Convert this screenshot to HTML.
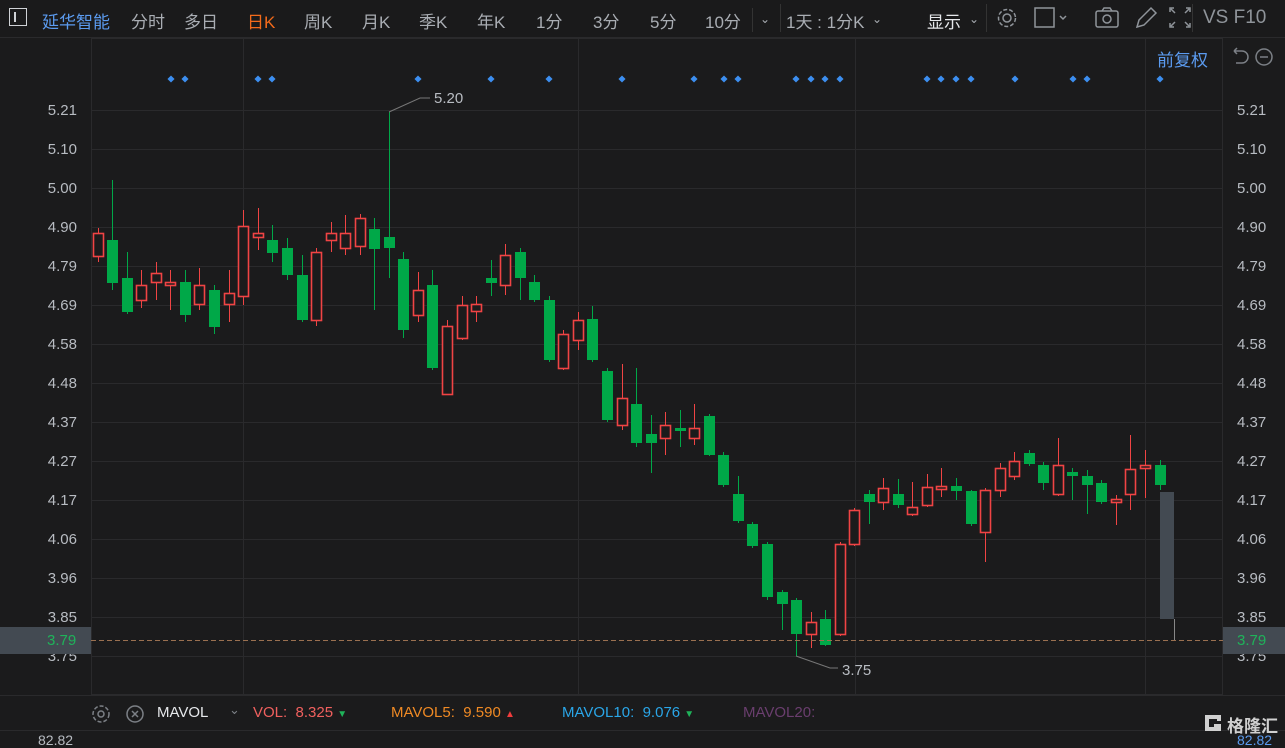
<!DOCTYPE html>
<html><head><meta charset="utf-8"><style>
body{margin:0;width:1285px;height:742px;background:#1b1b1c;overflow:hidden;font-family:"Liberation Sans","Noto Sans CJK SC",sans-serif;position:relative}
.t{position:absolute;white-space:nowrap}
.top span{position:absolute;top:8px;font-size:17px;color:#a9adb3}
</style></head><body>
<div style="position:absolute;left:0;top:0;width:1285px;height:37px;background:#1a1a1b;border-bottom:1px solid #2a2a2c"></div>
<div class="top">
<div style="position:absolute;left:9px;top:8px;width:18px;height:18px;border:1.5px solid #cfd2d6;box-sizing:border-box"></div>
<div style="position:absolute;left:14px;top:12px;width:2px;height:10px;background:#cfd2d6"></div>
<span style="left:42px;color:#5b9bf0">延华智能</span>
<span style="left:131px">分时</span><span style="left:184px">多日</span>
<span style="left:247px;color:#f26a1b">日K</span><span style="left:304px">周K</span>
<span style="left:362px">月K</span><span style="left:419px">季K</span><span style="left:477px">年K</span>
<span style="left:536px">1分</span><span style="left:593px">3分</span><span style="left:650px">5分</span>
<span style="left:705px">10分</span><span style="left:760px;font-size:12px;top:12px">⌄</span>
<span style="left:786px">1天 : 1分K</span><span style="left:872px;font-size:12px;top:12px">⌄</span>
<span style="left:927px;color:#e6e8eb">显示</span><span style="left:969px;font-size:12px;top:12px">⌄</span>
<span style="left:1203px;font-size:19px;top:7px;color:#8f949a">VS F10</span>
</div>
<div style="position:absolute;left:752px;top:8px;width:1px;height:24px;background:#333"></div>
<div style="position:absolute;left:780px;top:4px;width:1px;height:28px;background:#333"></div>
<div style="position:absolute;left:986px;top:4px;width:1px;height:28px;background:#333"></div>
<div style="position:absolute;left:1192px;top:4px;width:1px;height:28px;background:#333"></div>
<svg style="position:absolute;left:0;top:0" width="1285" height="40" fill="none" stroke="#8f949a" stroke-width="1.5">
<circle cx="1007" cy="18" r="4"/><circle cx="1007" cy="18" r="8.5" stroke-dasharray="4 2"/>
<rect x="1035" y="8" width="19" height="19"/><path d="M1060 16l3 3 3-3"/>
<rect x="1096" y="11" width="22" height="16" rx="2"/><circle cx="1107" cy="19" r="4"/><path d="M1102 11l2-3h6l2 3"/>
<path d="M1137 27l2-7 12-12 5 5-12 12z"/>
<path d="M1170 12v-4h4M1186 8h4v4M1190 23v4h-4M1174 27h-4v-4M1171 9l4 4M1189 9l-4 4M1189 26l-4-4M1171 26l4-4"/>
</svg>
<div class="t" style="left:1157px;top:46px;font-size:17px;color:#5b9bf0">前复权</div>
<svg style="position:absolute;left:1228px;top:45px" width="57" height="24" fill="none" stroke="#7c8086" stroke-width="1.5"><path d="M6 6h8a6 6 0 0 1 0 12h-6M6 6l3-3M6 6l3 3"/><circle cx="36" cy="12" r="8"/><path d="M32 12h8"/></svg>
<svg id="c" style="position:absolute;left:0;top:0" width="1285" height="742"></svg>
<div style="position:absolute;left:0;top:627px;width:91px;height:27px;background:#434a52"></div>
<div style="position:absolute;left:1223px;top:627px;width:62px;height:27px;background:#434a52"></div>
<div class="t" style="left:47px;top:632px;font-size:15px;color:#1fb35a">3.79</div>
<div class="t" style="left:1237px;top:632px;font-size:15px;color:#1fb35a">3.79</div>
<div class="t" style="left:842px;top:662px;font-size:15px;color:#b8bcc2">3.75</div>
<div class="t" style="left:434px;top:90px;font-size:15px;color:#b8bcc2">5.20</div>
<div style="position:absolute;left:0;top:695px;width:1285px;height:1px;background:#2a2a2c"></div>
<svg style="position:absolute;left:90px;top:702px" width="60" height="24" fill="none" stroke="#7c8086" stroke-width="1.5"><circle cx="11" cy="12" r="3"/><circle cx="11" cy="12" r="8" stroke-dasharray="4 2"/><circle cx="45" cy="12" r="8"/><path d="M42 9l6 6M48 9l-6 6"/></svg>
<div class="t" style="left:157px;top:704px;font-size:15px;color:#e6e8eb">MAVOL</div>
<div class="t" style="left:229px;top:702px;font-size:13px;color:#7c8086">⌄</div>
<div class="t" style="left:253px;top:704px;font-size:15px;color:#f0605e">VOL:&nbsp; 8.325 <span style="color:#1fb35a;font-size:10px">▼</span></div>
<div class="t" style="left:391px;top:704px;font-size:15px;color:#f08a24">MAVOL5:&nbsp; 9.590 <span style="color:#f03c3c;font-size:10px">▲</span></div>
<div class="t" style="left:562px;top:704px;font-size:15px;color:#2aa6e8">MAVOL10:&nbsp; 9.076 <span style="color:#1fb35a;font-size:10px">▼</span></div>
<div class="t" style="left:743px;top:704px;font-size:15px;color:#6a3e6e">MAVOL20:</div>
<div style="position:absolute;left:0;top:730px;width:1285px;height:1px;background:#2a2a2c"></div>
<div class="t" style="left:38px;top:732px;font-size:14px;color:#b8bcc2">82.82</div>
<div class="t" style="left:1237px;top:732px;font-size:14px;color:#5b9bf0">82.82</div>
<svg style="position:absolute;left:1204px;top:714px" width="18" height="18"><path d="M1 1h16v6h-4V5H5v8h5v-3h7v7H1z" fill="#d0d0d0"/></svg>
<div class="t" style="left:1227px;top:712px;font-size:17px;color:#d0d0d0;font-weight:bold">格隆汇</div>
<script>
var s='';
var gl='#2a2a2c';
s+='<rect x="91.5" y="38.5" width="1131" height="656" fill="none" stroke="'+gl+'"/>';
[243,578,855,1145].forEach(function(x){s+='<line x1="'+(x+.5)+'" y1="38" x2="'+(x+.5)+'" y2="694" stroke="'+gl+'"/>';});
var labs=['5.21','5.10','5.00','4.90','4.79','4.69','4.58','4.48','4.37','4.27','4.17','4.06','3.96','3.85'];
labs.forEach(function(l,i){var y=110+i*39;s+='<line x1="91" y1="'+(y+.5)+'" x2="1223" y2="'+(y+.5)+'" stroke="'+gl+'"/>';
s+='<text x="77" y="'+(y+5)+'" text-anchor="end" font-size="15" fill="#b8bcc2" font-family="Liberation Sans">'+l+'</text>';
s+='<text x="1237" y="'+(y+5)+'" font-size="15" fill="#b8bcc2" font-family="Liberation Sans">'+l+'</text>';});
s+='<line x1="91" y1="656.5" x2="1223" y2="656.5" stroke="'+gl+'"/>';
s+='<text x="77" y="661" text-anchor="end" font-size="15" fill="#b8bcc2" font-family="Liberation Sans">3.75</text>';
s+='<text x="1237" y="661" font-size="15" fill="#b8bcc2" font-family="Liberation Sans">3.75</text>';
var C=[[98,233,256,228,262,'r'],[112,240,283,180,290,'g'],[127,278,312,252,314,'g'],[141,285,300,270,308,'r'],[156,273,282,262,300,'r'],[170,282,285,270,310,'r'],[185,282,315,270,322,'g'],[199,285,304,268,310,'r'],[214,290,327,285,334,'g'],[229,293,304,270,322,'r'],[243,226,296,210,305,'r'],[258,233,237,208,250,'r'],[272,240,253,225,262,'g'],[287,248,275,238,280,'g'],[302,275,320,255,322,'g'],[316,252,320,248,326,'r'],[331,233,240,222,252,'r'],[345,233,248,215,255,'r'],[360,218,246,214,255,'r'],[374,229,249,218,310,'g'],[389,237,248,112,278,'g'],[403,259,330,252,338,'g'],[418,290,315,272,322,'r'],[432,285,368,270,370,'g'],[447,326,394,320,394,'r'],[462,305,338,296,340,'r'],[476,304,311,296,322,'r'],[491,278,283,260,296,'g'],[505,255,285,244,295,'r'],[520,252,278,248,300,'g'],[534,282,300,275,302,'g'],[549,300,360,296,362,'g'],[563,334,368,330,370,'r'],[578,320,340,312,350,'r'],[592,319,360,306,362,'g'],[607,371,420,368,422,'g'],[622,398,425,364,430,'r'],[636,404,443,368,447,'g'],[651,434,443,415,473,'g'],[665,425,438,412,455,'r'],[680,428,431,410,447,'g'],[694,428,438,404,445,'r'],[709,416,455,414,456,'g'],[723,455,485,452,487,'g'],[738,494,521,476,523,'g'],[752,524,546,522,548,'g'],[767,544,597,542,600,'g'],[782,592,604,590,630,'g'],[796,600,634,598,656,'g'],[811,622,634,612,648,'r'],[825,619,645,610,646,'g'],[840,544,634,542,636,'r'],[854,510,544,508,546,'r'],[869,494,502,490,524,'g'],[883,488,502,478,510,'r'],[898,494,505,479,508,'g'],[912,507,514,482,516,'r'],[927,487,505,474,507,'r'],[941,486,489,468,497,'r'],[956,486,491,478,500,'g'],[971,491,524,490,526,'g'],[985,490,532,488,562,'r'],[1000,468,490,463,497,'r'],[1014,461,476,452,480,'r'],[1029,453,464,450,466,'g'],[1043,465,483,462,490,'g'],[1058,465,494,438,496,'r'],[1072,472,476,468,500,'g'],[1087,476,485,470,514,'g'],[1101,483,502,480,504,'g'],[1116,499,502,495,525,'r'],[1130,469,494,435,510,'r'],[1145,465,468,450,498,'r'],[1160,465,485,460,490,'g']];
C.forEach(function(c){var r=c[5]=='r',col=r?'#f04444':'#00a848';
s+='<line x1="'+(c[0]+.5)+'" y1="'+c[3]+'" x2="'+(c[0]+.5)+'" y2="'+c[4]+'" stroke="'+col+'"/>';
if(r)s+='<rect x="'+(c[0]-4.5)+'" y="'+(c[1]+.5)+'" width="10" height="'+Math.max(c[2]-c[1],2)+'" fill="#1b1b1c" stroke="'+col+'" stroke-width="1.6"/>';
else s+='<rect x="'+(c[0]-5)+'" y="'+c[1]+'" width="11" height="'+Math.max(c[2]-c[1],2)+'" fill="'+col+'"/>';});
s+='<rect x="1160" y="492" width="14" height="127" fill="#434a52"/><line x1="1174.5" y1="619" x2="1174.5" y2="640" stroke="#888"/>';
s+='<line x1="91" y1="640.5" x2="1223" y2="640.5" stroke="#9a7050" stroke-dasharray="5 3"/>';
s+='<polyline points="389,112 420,98 430,98" fill="none" stroke="#777"/><polyline points="796,656 830,668 838,668" fill="none" stroke="#777"/>';
[171,185,258,272,418,491,549,622,694,724,738,796,811,825,840,927,941,956,971,1015,1073,1087,1160].forEach(function(x){s+='<rect x="'+(x-2.5)+'" y="76.5" width="5" height="5" fill="#3c8ef0" transform="rotate(45 '+x+' 79)"/>';});
document.getElementById('c').innerHTML=s;
</script>
</body></html>
